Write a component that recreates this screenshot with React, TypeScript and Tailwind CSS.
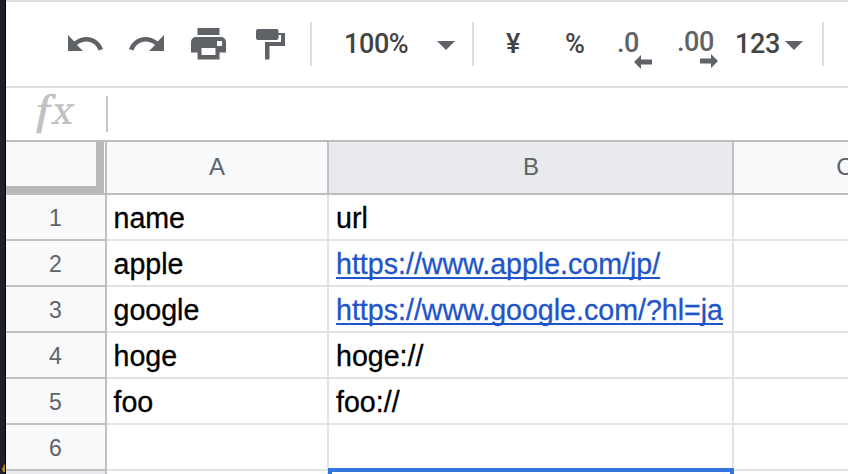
import type { ReactNode } from "react";

const rows = [
  { n: 1, a: "name", b: "url", link: false },
  { n: 2, a: "apple", b: "https://www.apple.com/jp/", link: true },
  { n: 3, a: "google", b: "https://www.google.com/?hl=ja", link: true },
  { n: 4, a: "hoge", b: "hoge://", link: false },
  { n: 5, a: "foo", b: "foo://", link: false },
  { n: 6, a: "", b: "", link: false },
];

function Divider() {
  return <div className="h-11 w-[2px] shrink-0 bg-[#dadce0]" />;
}

function Caret() {
  return (
    <svg className="mt-[3px] h-[9px] w-[18px] shrink-0" viewBox="0 0 18 9" fill="#5f6368">
      <path d="M0 0h18L9 9z" />
    </svg>
  );
}

function Label({ children, className }: { children: ReactNode; className: string }) {
  return (
    <span className={`shrink-0 whitespace-nowrap font-['Roboto',sans-serif] text-[27px] leading-[30px] font-medium tracking-[-0.4px] ${className}`}>
      {children}
    </span>
  );
}

function Toolbar() {
  return (
    <div className="flex h-[88px] shrink-0 items-center border-y-2 border-[#dadce0] fill-[#5f6368]">
      <svg className="mb-[2px] ml-[62px] h-4 w-[35px] shrink-0" viewBox="0 0 35 16">
        <path d="M0 0v16h15L9 10C11.500 7.800 15 6.500 18.500 6.500c5.700 0 10 3.500 12 9L35 14C32.500 7 26.500 2 18.500 2 13.800 2 9.500 3.800 6.300 6.600z" />
      </svg>
      <svg className="mb-[2px] ml-[26px] h-4 w-[35px] shrink-0" viewBox="0 0 35 16">
        <path d="M35 0v16H20L26 10C23.500 7.800 20 6.500 16.500 6.500c-5.700 0-10 3.500-12 9L0 14C2.500 7 8.500 2 16.500 2c4.700 0 9 1.800 12.200 4.600z" />
      </svg>
      <svg className="ml-[27px] h-8 w-[35px] shrink-0" viewBox="0 0 35 32">
        <path d="M6.500 0h22v7h-22z" />
        <path fillRule="evenodd" d="M5 9h25a5 5 0 0 1 5 5v10.500h-6.500v7h-22v-7H0V14a5 5 0 0 1 5-5zm5.500 11v7h14v-7zM26 13v5h5v-5z" />
      </svg>
      <svg className="ml-[30px] h-8 w-[29px] shrink-0" viewBox="0 0 29 32">
        <path d="M2 1h18.500a2 2 0 0 1 2 2v2H29v13H13.500v13.500H9V14h16V7h-2.500v3a2 2 0 0 1-2 2H2a2 2 0 0 1-2-2V3a2 2 0 0 1 2-2z" />
      </svg>
      <div className="w-[25px] shrink-0" />
      <Divider />
      <Label className="mb-px ml-[32px] w-[93px] text-[#444]">100%</Label>
      <Caret />
      <div className="w-[17px] shrink-0" />
      <Divider />
      <Label className="mb-px ml-[32px] w-[59px] text-[#444]">¥</Label>
      <Label className="mb-px w-[52px] text-[#444]">%</Label>
      <div className="flex h-12 w-[60px] shrink-0 flex-col pt-[8px]">
        <Label className="text-[#5f6368]">.0</Label>
        <svg className="-mt-[3px] ml-[17px] h-[14px] w-[18px] shrink-0" viewBox="0 0 18 14">
          <path d="M0 7l7-7v4.500h11v5H7V14z" />
        </svg>
      </div>
      <div className="flex h-12 w-[59px] shrink-0 flex-col pt-[7px]">
        <Label className="text-[#5f6368]">.00</Label>
        <svg className="-mt-[3px] ml-[23px] h-[14px] w-[18px] shrink-0" viewBox="0 0 18 14">
          <path d="M18 7l-7-7v4.500H0v5h11V14z" />
        </svg>
      </div>
      <Label className="mb-px -ml-px w-[50px] text-[#444]">123</Label>
      <Caret />
      <div className="w-[19px] shrink-0" />
      <Divider />
    </div>
  );
}

function FormulaBar() {
  return (
    <div className="flex h-[52px] shrink-0 items-center bg-white">
      <div className="flex h-full w-[100px] items-baseline pl-[31px] text-[#c0c1c3]">
        <span className="w-[16px] font-['Liberation_Serif',serif] text-[42px] leading-[45px] italic [-webkit-text-stroke:0.7px_#c0c1c3]">
          <span className="inline-block origin-center scale-x-[1.18]">f</span>
        </span>
        <span className="inline-block -skew-x-12 font-['DejaVu_Serif',serif] text-[38px] leading-[45px]">x</span>
      </div>
      <div className="h-9 w-[2px] bg-[#c6c7c8]" />
    </div>
  );
}

export default function App() {
  return (
    <div className="flex h-[474px] w-[848px] overflow-hidden bg-white font-['Liberation_Sans',Arial,sans-serif]">
      <div className="relative w-[6px] shrink-0 border-r border-black bg-[#1f1f2a]">
        <svg className="absolute bottom-[2px] left-[2px] h-[9px] w-[3px]" viewBox="0 0 3 9">
          <path d="M3 0v9H1L0 6z" fill="#b1872b" />
        </svg>
      </div>
      <div className="flex w-[842px] shrink-0 flex-col">
        <Toolbar />
        <FormulaBar />
        <div className="relative shrink-0">
          <div className="flex h-[55px] border-y-2 border-[#bdbdbd] bg-[#f8f9fa] text-[24px] text-[#5f6368]">
            <div className="flex w-[101px] shrink-0 border-r-2 border-[#c0c0c0]">
              <div className="w-[98px] border-r-8 border-b-[7px] border-[#b9b9b9]" />
            </div>
            <div className="flex w-[222px] shrink-0 items-center justify-center border-r-2 border-[#c0c0c0] pb-[2px]">A</div>
            <div className="flex w-[405px] shrink-0 items-center justify-center border-r-2 border-[#c0c0c0] bg-[#e8eaed] pb-[2px] pl-px">B</div>
            <div className="flex w-[222px] shrink-0 items-center justify-center pb-[2px]">C</div>
          </div>
          {rows.map((r) => (
            <div key={r.n} className="flex h-[46px] text-[28.6px] leading-[46px] whitespace-nowrap text-black">
              <div className="w-[101px] shrink-0 border-r-2 border-b-2 border-[#c0c0c0] bg-[#f8f9fa] text-center text-[23px] leading-[46px] text-[#5f6368]">
                {r.n}
              </div>
              <div className="w-[222px] shrink-0 border-r-2 border-b-2 border-[#e2e3e3] pl-[6.5px] [-webkit-text-stroke:0.3px]">{r.a}</div>
              <div className="w-[405px] shrink-0 border-r-2 border-b-2 border-[#e2e3e3] pl-[7px] [-webkit-text-stroke:0.3px]">
                {r.link ? (
                  <span className="text-[#1f55c8] underline decoration-2 underline-offset-[3px] [text-decoration-skip-ink:none]">{r.b}</span>
                ) : (
                  r.b
                )}
              </div>
              <div className="w-[114px] shrink-0 border-b-2 border-[#e2e3e3]" />
            </div>
          ))}
          <div className="flex h-[46px]">
            <div className="w-[101px] shrink-0 border-r-2 border-[#c0c0c0] bg-[#e8eaed]" />
            <div className="w-[222px] shrink-0 border-r-2 border-[#e2e3e3]" />
            <div className="w-[405px] shrink-0 border-r-2 border-[#e2e3e3]" />
          </div>
          <div className="absolute top-[328px] left-[322px] h-[48px] w-[406px] border-4 border-[#3474e0]" />
        </div>
      </div>
    </div>
  );
}
